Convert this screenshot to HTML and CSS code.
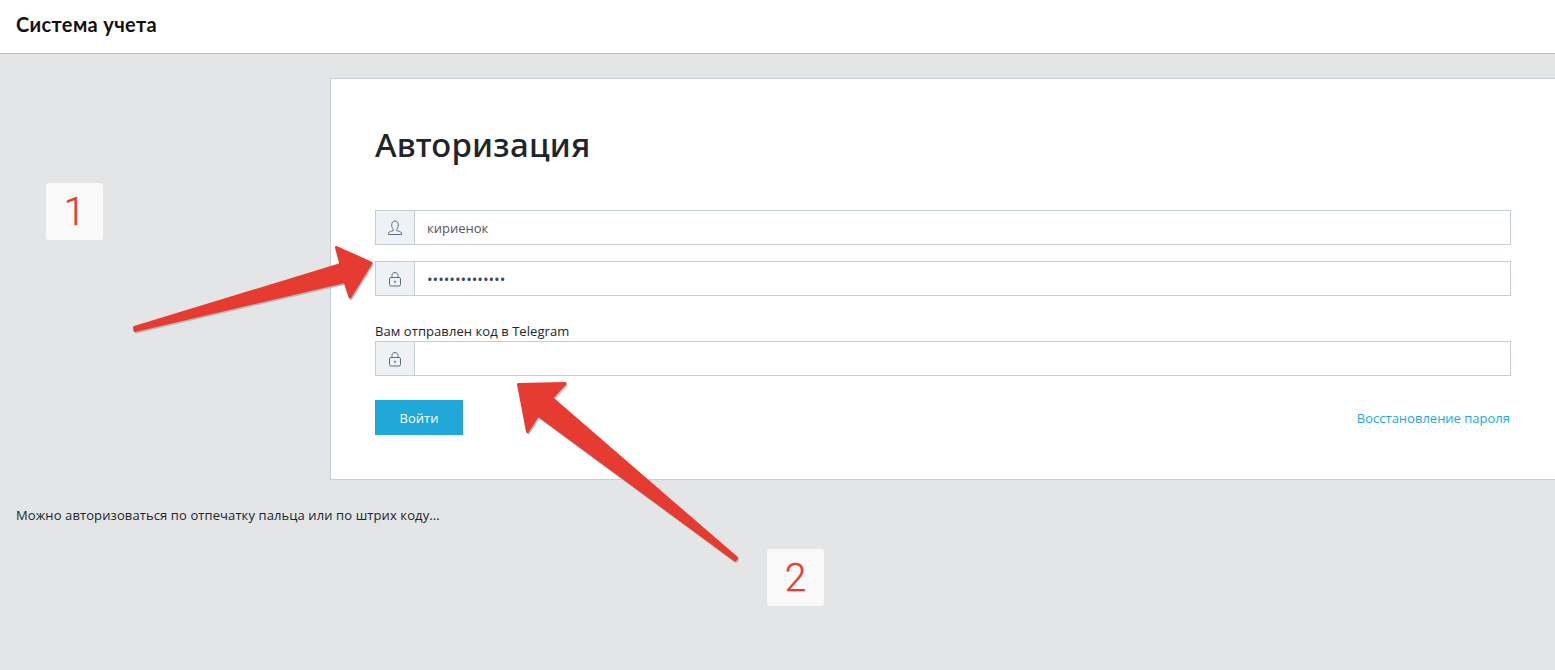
FILE: index.html
```html
<!DOCTYPE html>
<html lang="ru">
<head>
<meta charset="utf-8">
<title>Система учета</title>
<link rel="stylesheet" href="styles.css">
</head>
<body>
<header class="topbar"><span class="brand">Система учета</span></header>
<main class="content">
  <section class="card">
    <h1 class="title">Авторизация</h1>
    <form class="form">
      <div class="field">
        <span class="addon">
          <svg class="icon" viewBox="0 0 16 16"><path d="M4.700 5C4.700 2.400 6.100 1 8 1s3.300 1.400 3.300 4c0 2-.7 3.500-1.500 4.300v1.400c1.800.6 4.300.8 4.700 2.300v1.500H1.500V13c.4-1.500 2.900-1.700 4.700-2.300V9.300C5.400 8.500 4.700 7 4.700 5z"/></svg>
        </span>
        <input class="input" type="text" value="кириенок">
      </div>
      <div class="field field-second">
        <span class="addon">
          <svg class="icon" viewBox="0 0 16 16"><rect x="2.500" y="6.500" width="11" height="8.500" rx="1.500"/><path d="M5 6.500V4.500C5 2.700 6.300 1.500 8 1.500s3 1.200 3 3v2"/><circle class="dot" cx="8" cy="10.700" r="1"/></svg>
        </span>
        <input class="input input-secret" type="text" value="••••••••••••••">
      </div>
      <label class="hint">Вам отправлен код в Telegram</label>
      <div class="field">
        <span class="addon">
          <svg class="icon" viewBox="0 0 16 16"><rect x="2.500" y="6.500" width="11" height="8.500" rx="1.500"/><path d="M5 6.500V4.500C5 2.700 6.300 1.500 8 1.500s3 1.200 3 3v2"/><circle class="dot" cx="8" cy="10.700" r="1"/></svg>
        </span>
        <input class="input" type="text">
      </div>
      <div class="actions">
        <button class="submit" type="button">Войти</button>
        <a class="restore" href="#">Восстановление пароля</a>
      </div>
    </form>
  </section>
  <p class="note">Можно авторизоваться по отпечатку пальца или по штрих коду...</p>
</main>

<svg class="arrows" viewBox="0 0 1555 670" width="1555" height="670">
  <g class="arrow-shadow">
    <path d="M134.500 327.500 341 264.500 336.500 247.500 371 263 350 297 345 281.500 135 330.500Z"/>
    <path d="M735 560 538 415 527.500 431.500 518.500 384.500 565 383.500 551.500 398 736.500 558Z"/>
  </g>
  <g class="arrow-fill">
    <path d="M134.500 327.500 341 264.500 336.500 247.500 371 263 350 297 345 281.500 135 330.500Z"/>
    <path d="M735 560 538 415 527.500 431.500 518.500 384.500 565 383.500 551.500 398 736.500 558Z"/>
  </g>
</svg>
<div class="badge badge-one">1</div>
<div class="badge badge-two">2</div>
</body>
</html>
```

FILE: styles.css
```css
* { box-sizing: border-box; }
html, body { height: 100%; margin: 0; }
body {
  position: relative;
  display: flex;
  flex-direction: column;
  overflow: hidden;
  background: #e3e5e7;
  font-family: "Open Sans", "Noto Sans", sans-serif;
  font-size: 13px;
  color: #212529;
}
.topbar {
  flex: none;
  display: flex;
  align-items: center;
  height: 54px;
  padding: 0 16px 5px;
  background: #fff;
  border-bottom: 1px solid #b3bfcc;
}
.brand {
  font-family: "Lato", sans-serif;
  font-size: 20px;
  font-weight: 700;
  color: #111;
  letter-spacing: .35px;
}
.content { flex: 1; padding-top: 24px; }
.card {
  height: 402px;
  margin-left: 330px;
  padding: 42px 44px 0;
  background: #fff;
  border: 1px solid #c3ced8;
  border-right: 0;
}
.title {
  margin: 0 0 41px;
  font-family: "Noto Sans", "Open Sans", sans-serif;
  font-size: 33px;
  line-height: 48px;
  font-weight: 500;
  letter-spacing: .25px;
  color: #212529;
}
.form { display: flex; flex-direction: column; }
.field { display: flex; height: 35px; border: 1px solid #c3ced8; }
.field-second { margin-top: 16px; }
.addon {
  flex: none;
  display: flex;
  align-items: center;
  justify-content: center;
  width: 39px;
  background: #eff2f5;
  border-right: 1px solid #c3ced8;
}
.icon { width: 16px; height: 16px; fill: none; stroke: #5b6f88; stroke-width: 1; }
.icon .dot { fill: #5b6f88; stroke: none; }
.input {
  flex: 1;
  min-width: 0;
  padding: 0 12px;
  border: 0;
  outline: 0;
  background: #fff;
  font: inherit;
  color: #4d5765;
}
.input-secret { font-size: 15px; letter-spacing: -.05px; color: #3c4656; }
.hint { margin-top: 26px; height: 19px; line-height: 18px; letter-spacing: .07px; color: #212529; }
.actions {
  display: flex;
  align-items: center;
  justify-content: space-between;
  margin-top: 24px;
  padding-right: 1px;
}
.submit {
  width: 88px;
  height: 35px;
  padding: 0;
  border: 0;
  background: #1fa8d8;
  color: #fff;
  font: inherit;
}
.restore { color: #1fa8d8; text-decoration: none; }
.note { margin: 26px 0 0 16px; line-height: 18px; letter-spacing: .1px; color: #212529; }
.arrows { position: absolute; left: 0; top: 0; pointer-events: none; }
.arrow-fill path { fill: #e63b30; stroke: #e63b30; stroke-width: 3; stroke-linejoin: round; }
.arrow-shadow { transform: translate(1px, 1.500px); }
.arrow-shadow path { fill: #b9b9b9; stroke: #b9b9b9; stroke-width: 3; stroke-linejoin: round; }
.badge {
  position: absolute;
  display: flex;
  align-items: center;
  justify-content: center;
  width: 57px;
  height: 57px;
  border-radius: 3px;
  background: #f9f9f9;
  font-family: "Roboto", sans-serif;
  font-size: 39px;
  font-weight: 300;
  -webkit-text-stroke: .3px #e63b30;
  color: #e63b30;
}
.badge-one { left: 46px; top: 183px; }
.badge-two { left: 767px; top: 549px; }
```
